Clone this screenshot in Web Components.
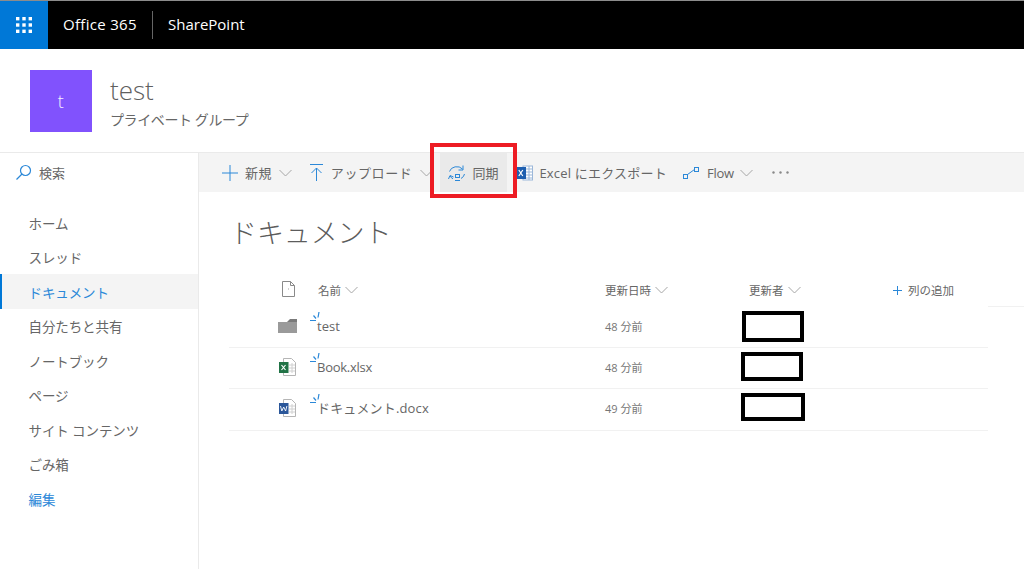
<!DOCTYPE html>
<html lang="ja"><head><meta charset="utf-8"><title>SharePoint</title>
<style>
html,body{margin:0;padding:0;background:#fff;height:100%;overflow:hidden}
body{font-family:"Open Sans","Noto Sans CJK JP",sans-serif;color:#666}
</style></head><body>
<sp-app></sp-app>
<script>
const F='"Open Sans","Noto Sans CJK JP",sans-serif';
const chev=(c='#a6a6a6',w=13)=>`<svg width="${w}" height="${Math.round(w*.6)}" viewBox="0 0 13 8" fill="none" stroke="${c}" stroke-width="1"><path d="M.5 1l6 6 6-6"/></svg>`;
function def(name,css,html){
  customElements.define(name,class extends HTMLElement{
    constructor(){super();const s=this.attachShadow({mode:'open'});
      s.innerHTML=`<style>${css}</style>${typeof html==='function'?html(this):html}`;}
  });
}
def('sp-topbar',`:host{display:flex;height:48px;background:#000;border-top:1px solid #8c8c8c;color:#fff;align-items:center;font:15px/20px ${F}}
.w{width:48px;height:48px;background:#0078d7;display:flex;align-items:center;justify-content:center}
.o{margin-left:15px;width:74px;white-space:nowrap;letter-spacing:.3px;padding-bottom:2px}
.s{width:1px;height:28px;background:#666;margin:0 15px}
.p{padding-bottom:2px}
`,`<div class="w"><svg width="16" height="16" viewBox="0 0 16 16" fill="#fff"><rect x="0" y="0" width="3.4" height="3.4"/><rect x="6.3" y="0" width="3.4" height="3.4"/><rect x="12.6" y="0" width="3.4" height="3.4"/><rect x="0" y="6.3" width="3.4" height="3.4"/><rect x="6.3" y="6.3" width="3.4" height="3.4"/><rect x="12.6" y="6.3" width="3.4" height="3.4"/><rect x="0" y="12.6" width="3.4" height="3.4"/><rect x="6.3" y="12.6" width="3.4" height="3.4"/><rect x="12.6" y="12.6" width="3.4" height="3.4"/></svg></div><div class="o">Office 365</div><div class="s"></div><div class="p">SharePoint</div>`);

def('sp-site-header',`:host{display:flex;height:104px;box-sizing:border-box;padding:21px 0 0 29.500px;border-bottom:1px solid #eaeaea}
.l{width:62.500px;height:62px;background:#8152fd;color:#f5f0ff;display:flex;align-items:center;justify-content:center;font-size:18px;font-weight:300}
.t{margin-left:18px}
.n{font-size:26px;line-height:36px;font-weight:300;color:#5f5f5f;margin-top:2px}
.p{font-size:14px;line-height:20px;color:#666;margin-top:2px;letter-spacing:-.4px}
`,`<div class="l">t</div><div class="t"><div class="n">test</div><div class="p">プライベート グループ</div></div>`);

def('sp-nav-item',`:host{display:flex;align-items:center;height:34.500px;padding-left:28.500px;padding-top:1px;font-size:13.500px;letter-spacing:-.1px;color:#666;box-sizing:border-box;white-space:nowrap}
:host([active]){background:#f4f4f4;color:#2b88d8;border-left:2px solid #0078d7;padding-left:26.500px}
:host([link]){color:#2b88d8}`,`<slot></slot>`);

def('sp-nav',`:host{display:block;width:199px;box-sizing:border-box;border-right:1px solid #eaeaea;flex:none}
.q{height:39px;display:flex;align-items:center;padding-left:15px;font-size:13px;color:#666;gap:7px}
.i{padding-top:13px}`,
`<div class="q"><svg width="17" height="17" viewBox="0 0 17 17" fill="none" stroke="#2b88d8" stroke-width="1.2"><circle cx="10.5" cy="6.5" r="5"/><path d="M7 10L1.5 15.5"/></svg><span>検索</span></div><div class="i"><slot></slot></div>`);

def('sp-cmd',`:host{display:flex;align-items:center;height:39px;font-size:13px;color:#666;white-space:nowrap;flex:none}
:host([selected]){background:#eaeaea}
::slotted(svg){flex:none}`,`<slot></slot>`);

def('sp-command-bar',`:host{display:flex;align-items:center;height:39px;background:#f4f4f4;flex:none;position:relative;padding-left:23px;font-size:13px}`,`<slot></slot>`);

def('sp-highlight',`:host{display:block;position:absolute;left:231px;top:-10px;width:87px;height:55px;box-sizing:border-box;border:4px solid #ed1c24;pointer-events:none}`,``);

def('sp-doc-row',`:host{display:grid;grid-template-columns:88px 288px 138px 1fr;align-items:center;width:759px;box-sizing:border-box;border-bottom:1px solid #f1f1f1;height:41px;padding-bottom:3px;font-size:13px;color:#666}
.ic{display:flex;justify-content:center;padding-left:48px;width:20px;box-sizing:content-box}
.n{position:relative;font-size:13px;line-height:18px;color:#666;white-space:nowrap}
.n svg{position:absolute;left:-7px;top:-5px}
.m{font-size:11px;color:#767676;letter-spacing:0}
.b{display:flex}`,
h=>`<div class="ic"><slot name="icon"></slot></div><div class="n"><svg width="10" height="10" viewBox="0 0 10 10" fill="none" stroke="#2b88d8" stroke-width="1.200"><path d="M0 8.500h6M3.500 3.500l2.500 3M9 0L8 5.500"/></svg>${h.getAttribute('name')}</div><div class="m">${h.getAttribute('time')}</div><div class="b"><slot name="by"></slot></div>`);

def('sp-redact',`:host{display:block;width:62px;box-sizing:border-box;border:4.500px solid #000;background:#fff}`,``);

def('sp-doc-list',`:host{display:block;padding-left:30px;flex:1}
h1{font-size:27px;font-weight:300;line-height:40px;margin:21px 0 0 1px;color:#5c5c5c;letter-spacing:-.1px}
.h{display:flex;align-items:center;height:35px;margin-top:19px;font-size:11.500px;color:#666;position:relative;width:795px}
.h>span{display:flex;align-items:center;gap:4px;white-space:nowrap;position:absolute;top:10px}
.ln{position:absolute;right:0;bottom:0;width:36px;height:1px;background:#f1f1f1}
`,
`<h1>ドキュメント</h1><div class="h"><span style="left:53px;top:9px"><svg width="13" height="16" viewBox="0 0 13 16" fill="#fff" stroke="#8a8a8a"><path d="M.5.5h8l4 4v11H.5z"/><path d="M8.500.5v4h4" fill="none"/><path d="M6 8h1" stroke="#a0a0a0"/></svg></span><span style="left:89px">名前${chev()}</span><span style="left:376px">更新日時${chev()}</span><span style="left:520px">更新者${chev()}</span><span style="left:664px;gap:0"><svg width="9" height="9" viewBox="0 0 9 9" stroke="#2b88d8" fill="none" style="margin-right:6px"><path d="M4.500 0v9M0 4.500h9"/></svg>列の追加</span><i class="ln"></i></div><slot></slot>`);

const icoFolder=`<svg slot="icon" width="19" height="14" viewBox="0 0 19 14"><path d="M0 3h19v11H0z" fill="#9a9a9a"/><path d="M9 3l3-3h7v3z" fill="#7a7a7a"/></svg>`;
const paper=`<path d="M4.500.5h8l4 4v13h-12z" fill="#fff" stroke="#b5b5b5"/><path d="M10 7h6M10 10h6M10 13h6M13 5v10" stroke="#d0d0d0"/>`;
const icoX=`<svg slot="icon" width="17" height="18" viewBox="0 0 17 18">${paper}<rect x="0" y="4" width="9.500" height="11" fill="#217346"/><path d="M2.500 7l4 5M6.500 7l-4 5" stroke="#fff" stroke-width="1.200"/></svg>`;
const icoW=`<svg slot="icon" width="17" height="18" viewBox="0 0 17 18">${paper}<rect x="0" y="4" width="9.500" height="11" fill="#2b579a"/><path d="M1.500 7l1.300 5 1.900-4 1.900 4 1.300-5" stroke="#fff" fill="none" stroke-width=".9"/></svg>`;

def('sp-app',`:host{display:block;height:569px;overflow:hidden;background:#fff}
.b{display:flex;height:416px}
.r{flex:1;display:flex;flex-direction:column;min-width:0}
svg{display:block}
`,`
<sp-topbar></sp-topbar>
<sp-site-header></sp-site-header>
<div class="b">
<sp-nav>
 <sp-nav-item>ホーム</sp-nav-item><sp-nav-item>スレッド</sp-nav-item><sp-nav-item active>ドキュメント</sp-nav-item><sp-nav-item>自分たちと共有</sp-nav-item><sp-nav-item>ノートブック</sp-nav-item><sp-nav-item>ページ</sp-nav-item><sp-nav-item>サイト コンテンツ</sp-nav-item><sp-nav-item>ごみ箱</sp-nav-item><sp-nav-item link>編集</sp-nav-item>
</sp-nav>
<div class="r">
<sp-command-bar>
 <sp-cmd><svg width="16" height="16" viewBox="0 0 16 16" stroke="#2b88d8" fill="none" style="margin-right:7px"><path d="M8 0v16M0 8h16"/></svg><span style="letter-spacing:.4px">新規</span><span style="margin:0 18px 0 7px">${chev()}</span></sp-cmd>
 <sp-cmd><svg width="13" height="17" viewBox="0 0 13 17" stroke="#2b88d8" fill="none" style="margin-right:8px"><path d="M0 .5h13M6.500 17V4M1.500 9l5-5 5 5"/></svg><span style="letter-spacing:.6px">アップロード</span><span style="margin:0 7px 0 8px">${chev()}</span></sp-cmd>
 <sp-cmd selected style="padding:0 9px 0 8px"><svg width="18" height="16" viewBox="0 0 18 16" fill="none" stroke="#2b88d8" style="margin-right:6px"><path d="M1.500 6.500A7.500 6.500 0 0 1 14.500 4"/><path d="M15 .5V5h-4.500"/><path d="M16.500 9a7.500 6.500 0 0 1-3.500 4.500"/><path d="M5 13.800A7.500 6.500 0 0 1 2 11"/><path d="M.5 14l1.500-3.500 3.500 1.500"/><rect x="7.500" y="9.500" width="4" height="3"/><path d="M7 15.500h5"/></svg>同期</sp-cmd>
 <sp-cmd style="margin-left:9px"><svg width="17" height="16" viewBox="0 0 17 16" style="margin-right:6px"><rect x="7" y="1" width="9.500" height="14" fill="#fff" stroke="#9bb7d9"/><path d="M10 4h6M10 7h6M10 10h6M10 13h6M13 1v14" stroke="#9bb7d9"/><rect x="0" y="2" width="10" height="12" fill="#1e5fb0"/><path d="M2.800 5l4 6M6.800 5l-4 6" stroke="#fff" stroke-width="1.200"/></svg><span style="letter-spacing:.2px">Excel にエクスポート</span></sp-cmd>
 <sp-cmd style="margin-left:16px"><svg width="16" height="12" viewBox="0 0 16 12" fill="none" stroke="#2b88d8" style="margin-right:8px"><rect x=".5" y="7.500" width="4" height="4"/><rect x="11.500" y=".5" width="4" height="4"/><path d="M4.500 7.500l7-5"/></svg><span style="letter-spacing:-.2px">Flow</span><span style="margin-left:6px">${chev()}</span></sp-cmd>
 <sp-cmd style="margin-left:19px"><svg width="17" height="3" viewBox="0 0 17 3" fill="#888"><circle cx="1.500" cy="1.500" r="1.200"/><circle cx="8.500" cy="1.500" r="1.200"/><circle cx="15.500" cy="1.500" r="1.200"/></svg></sp-cmd>
 <sp-highlight></sp-highlight>
</sp-command-bar>
<sp-doc-list>
 <sp-doc-row name="test" time="48 分前">${icoFolder}<sp-redact slot="by" style="height:31px;margin:1px 0 0 -1px"></sp-redact></sp-doc-row>
 <sp-doc-row name="Book.xlsx" time="48 分前" style="letter-spacing:-.25px">${icoX}<sp-redact slot="by" style="height:29px;margin:-1px 0 0 -2px"></sp-redact></sp-doc-row>
 <sp-doc-row name="ドキュメント.docx" time="49 分前" style="height:42px;padding-bottom:4px;letter-spacing:.15px">${icoW}<sp-redact slot="by" style="height:28px;margin:-2px 0 0 -2px;width:64px"></sp-redact></sp-doc-row>
</sp-doc-list>
</div></div>`);
</script>
</body></html>
